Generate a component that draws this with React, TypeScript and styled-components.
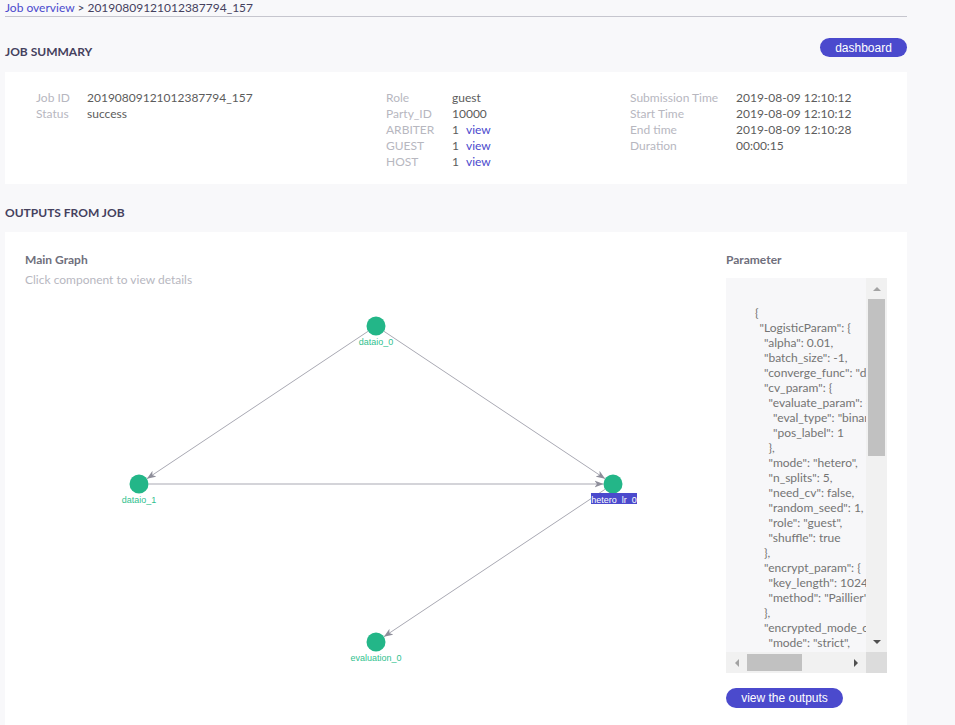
import React from 'react';
import styled, { createGlobalStyle } from 'styled-components';

const GlobalStyle = createGlobalStyle`
  body {
    margin: 0;
    background: #f8f8fa;
    font-family: Lato, "Open Sans", sans-serif;
    font-size: 12px;
  }
`;

const Color = {
  brand: '#4b4acd',
  title: '#45415e',
  label: '#b7b7bf',
  value: '#5c5c5c',
  node: '#23b688',
  nodeText: '#31bf8f',
  edge: '#a9a9b3',
};

const Page = styled.div`
  width: 902px;
  padding-left: 5px;
`;

const Breadcrumb = styled.div`
  height: 16px;
  line-height: 15px;
  border-bottom: 1px solid #c6c6ce;
  color: ${Color.title};
  white-space: nowrap;
`;

const Crumb = styled.a`
  color: ${Color.brand};
  text-decoration: none;
  cursor: pointer;
`;

const SectionHeader = styled.div<{ $height: number; $pb: number }>`
  display: flex;
  justify-content: space-between;
  align-items: flex-end;
  box-sizing: border-box;
  height: ${(p) => p.$height}px;
  padding-bottom: ${(p) => p.$pb}px;
`;

const SectionTitle = styled.h2`
  margin: 0;
  font-size: 12px;
  line-height: 16px;
  font-weight: 700;
  color: ${Color.title};
`;

const PillButton = styled.button<{ $width: number; $height?: number; $mb?: number }>`
  width: ${(p) => p.$width}px;
  height: ${(p) => p.$height ?? 20}px;
  margin-bottom: ${(p) => p.$mb ?? 0}px;
  padding: 0;
  border: none;
  border-radius: 10px;
  background: ${Color.brand};
  color: #fff;
  font-family: "Liberation Sans", Arial, sans-serif;
  font-size: 12px;
  cursor: pointer;
`;

const SummaryCard = styled.div`
  display: grid;
  grid-template-columns: 350px 244px 1fr;
  padding: 18px 0 14px 31px;
  background: #fff;
`;

const InfoGroup = styled.dl<{ $labelWidth: number }>`
  display: grid;
  grid-template-columns: ${(p) => p.$labelWidth}px auto;
  grid-auto-rows: 16px;
  align-content: start;
  margin: 0;
  line-height: 16px;
`;

const InfoLabel = styled.dt`
  color: ${Color.label};
`;

const InfoValue = styled.dd`
  margin: 0;
  color: ${Color.value};
  white-space: nowrap;
`;

const ViewLink = styled.a`
  margin-left: 7px;
  color: ${Color.brand};
  cursor: pointer;
`;

const OutputsCard = styled.div`
  display: flex;
  padding: 20px;
  background: #fff;
`;

const GraphColumn = styled.div`
  flex: 1;
`;

const ParamColumn = styled.div`
  width: 161px;
  flex-shrink: 0;
  display: flex;
  flex-direction: column;
  align-items: flex-start;
`;

const PanelTitle = styled.div`
  font-weight: 700;
  line-height: 16px;
  color: #6f6f7c;
`;

const Hint = styled.div`
  margin-top: 4px;
  line-height: 16px;
  color: ${Color.label};
`;

const GraphSvg = styled.svg`
  display: block;
  margin-top: 8px;
`;

const ScrollBox = styled.div`
  display: grid;
  grid-template-columns: 140px 21px;
  grid-template-rows: 374px 21px;
  margin: 10px 0 15px;
  background: #f7f7f9;
`;

const JsonView = styled.div`
  overflow: hidden;
  padding: 27px 0 0 29px;
  line-height: 15px;
  color: #747474;
  white-space: pre;
`;

const JsonLine = styled.div<{ $depth: number }>`
  padding-left: ${(p) => p.$depth * 4.5}px;
`;

const ScrollTrack = styled.div<{ $vertical?: boolean }>`
  display: flex;
  flex-direction: ${(p) => (p.$vertical ? 'column' : 'row')};
  background: #f1f1f1;
`;

const ScrollArrow = styled.div`
  width: 21px;
  height: 21px;
  flex-shrink: 0;
  display: flex;
  align-items: center;
  justify-content: center;
`;

const Triangle = styled.span<{ $dir: 'up' | 'down' | 'left' | 'right'; $active?: boolean }>`
  width: 0;
  height: 0;
  border: 4px solid transparent;
  ${(p) => {
    const c = p.$active ? '#505050' : '#a3a3a3';
    if (p.$dir === 'up') return `border-top-width: 0; border-bottom: 4px solid ${c};`;
    if (p.$dir === 'down') return `border-bottom-width: 0; border-top: 4px solid ${c};`;
    if (p.$dir === 'left') return `border-left-width: 0; border-right: 4px solid ${c};`;
    return `border-right-width: 0; border-left: 4px solid ${c};`;
  }}
`;

const ThumbSlot = styled.div`
  flex: 1;
  display: flex;
`;

const Thumb = styled.div<{ $vertical?: boolean; $size: number }>`
  background: #c1c1c1;
  ${(p) =>
    p.$vertical
      ? `width: 17px; height: ${p.$size}px; margin: 0 2px;`
      : `height: 17px; width: ${p.$size}px; margin: 2px 0;`}
`;

const Corner = styled.div`
  background: #dcdcdc;
`;

const summary = [
  {
    labelWidth: 51,
    rows: [
      ['Job ID', '20190809121012387794_157'],
      ['Status', 'success'],
    ],
  },
  {
    labelWidth: 66,
    rows: [
      ['Role', 'guest'],
      ['Party_ID', '10000'],
      ['ARBITER', '1', true],
      ['GUEST', '1', true],
      ['HOST', '1', true],
    ],
  },
  {
    labelWidth: 106,
    rows: [
      ['Submission Time', '2019-08-09 12:10:12'],
      ['Start Time', '2019-08-09 12:10:12'],
      ['End time', '2019-08-09 12:10:28'],
      ['Duration', '00:00:15'],
    ],
  },
] as { labelWidth: number; rows: [string, string, boolean?][] }[];

const jsonLines: [number, string][] = [
  [0, '{'],
  [1, '"LogisticParam": {'],
  [2, '"alpha": 0.01,'],
  [2, '"batch_size": -1,'],
  [2, '"converge_func": "diff",'],
  [2, '"cv_param": {'],
  [3, '"evaluate_param": {'],
  [4, '"eval_type": "binary",'],
  [4, '"pos_label": 1'],
  [3, '},'],
  [3, '"mode": "hetero",'],
  [3, '"n_splits": 5,'],
  [3, '"need_cv": false,'],
  [3, '"random_seed": 1,'],
  [3, '"role": "guest",'],
  [3, '"shuffle": true'],
  [2, '},'],
  [2, '"encrypt_param": {'],
  [3, '"key_length": 1024,'],
  [3, '"method": "Paillier"'],
  [2, '},'],
  [2, '"encrypted_mode_calculator_param": {'],
  [3, '"mode": "strict",'],
  [3, '"re_encrypted_rate": 1'],
  [2, '},'],
];

type GraphNode = { id: string; x: number; y: number; selected?: boolean };

const nodes: GraphNode[] = [
  { id: 'dataio_0', x: 351, y: 30 },
  { id: 'dataio_1', x: 114, y: 188 },
  { id: 'hetero_lr_0', x: 588, y: 188, selected: true },
  { id: 'evaluation_0', x: 351, y: 346 },
];

const edges: [string, string][] = [
  ['dataio_0', 'dataio_1'],
  ['dataio_0', 'hetero_lr_0'],
  ['dataio_1', 'hetero_lr_0'],
  ['hetero_lr_0', 'evaluation_0'],
];

const R = 9.5;

function Graph() {
  const find = (id: string) => nodes.find((n) => n.id === id)!;
  return (
    <GraphSvg width={701} height={380}>
      <defs>
        <marker
          id="arrow"
          markerUnits="userSpaceOnUse"
          markerWidth={9}
          markerHeight={8}
          refX={9}
          refY={4}
          orient="auto"
        >
          <path d="M0,0.5 L9,4 L0,7.5 L2.5,4 Z" fill="#8e8e9a" />
        </marker>
      </defs>
      {edges.map(([a, b]) => {
        const s = find(a);
        const t = find(b);
        const dx = t.x - s.x;
        const dy = t.y - s.y;
        const len = Math.hypot(dx, dy);
        const ux = dx / len;
        const uy = dy / len;
        return (
          <line
            key={a + b}
            x1={s.x + ux * R}
            y1={s.y + uy * R}
            x2={t.x - ux * R}
            y2={t.y - uy * R}
            stroke={Color.edge}
            strokeWidth={1}
            markerEnd="url(#arrow)"
          />
        );
      })}
      {nodes.map((n) => (
        <g key={n.id}>
          <circle cx={n.x} cy={n.y} r={R} fill={Color.node} />
          {n.selected && <rect x={n.x - 22} y={n.y + 9} width={46} height={11} fill={Color.brand} />}
          <text
            x={n.x + (n.selected ? 1 : 0)}
            y={n.y + (n.selected ? 18.5 : 19)}
            textAnchor="middle"
            fontFamily='"Liberation Sans", Arial, sans-serif'
            fontSize={9}
            fill={n.selected ? '#fff' : Color.nodeText}
          >
            {n.id}
          </text>
        </g>
      ))}
    </GraphSvg>
  );
}

export default function App() {
  return (
    <>
      <GlobalStyle />
      <Page>
        <Breadcrumb>
          <Crumb>Job overview</Crumb> &gt; 20190809121012387794_157
        </Breadcrumb>

        <SectionHeader $height={55} $pb={12}>
          <SectionTitle>JOB SUMMARY</SectionTitle>
          <PillButton $width={87} $height={19} $mb={3}>
            dashboard
          </PillButton>
        </SectionHeader>

        <SummaryCard>
          {summary.map((group, i) => (
            <InfoGroup key={i} $labelWidth={group.labelWidth}>
              {group.rows.map(([label, value, link]) => (
                <React.Fragment key={label}>
                  <InfoLabel>{label}</InfoLabel>
                  <InfoValue>
                    {value}
                    {link && <ViewLink>view</ViewLink>}
                  </InfoValue>
                </React.Fragment>
              ))}
            </InfoGroup>
          ))}
        </SummaryCard>

        <SectionHeader $height={48} $pb={11}>
          <SectionTitle>OUTPUTS FROM JOB</SectionTitle>
        </SectionHeader>

        <OutputsCard>
          <GraphColumn>
            <PanelTitle>Main Graph</PanelTitle>
            <Hint>Click component to view details</Hint>
            <Graph />
          </GraphColumn>
          <ParamColumn>
            <PanelTitle>Parameter</PanelTitle>
            <ScrollBox>
              <JsonView>
                {jsonLines.map(([depth, text], i) => (
                  <JsonLine key={i} $depth={depth}>
                    {text}
                  </JsonLine>
                ))}
              </JsonView>
              <ScrollTrack $vertical>
                <ScrollArrow>
                  <Triangle $dir="up" />
                </ScrollArrow>
                <ThumbSlot>
                  <Thumb $vertical $size={157} />
                </ThumbSlot>
                <ScrollArrow>
                  <Triangle $dir="down" $active />
                </ScrollArrow>
              </ScrollTrack>
              <ScrollTrack>
                <ScrollArrow>
                  <Triangle $dir="left" />
                </ScrollArrow>
                <ThumbSlot>
                  <Thumb $size={55} />
                </ThumbSlot>
                <ScrollArrow>
                  <Triangle $dir="right" $active />
                </ScrollArrow>
              </ScrollTrack>
              <Corner />
            </ScrollBox>
            <PillButton $width={117}>view the outputs</PillButton>
          </ParamColumn>
        </OutputsCard>
      </Page>
    </>
  );
}
